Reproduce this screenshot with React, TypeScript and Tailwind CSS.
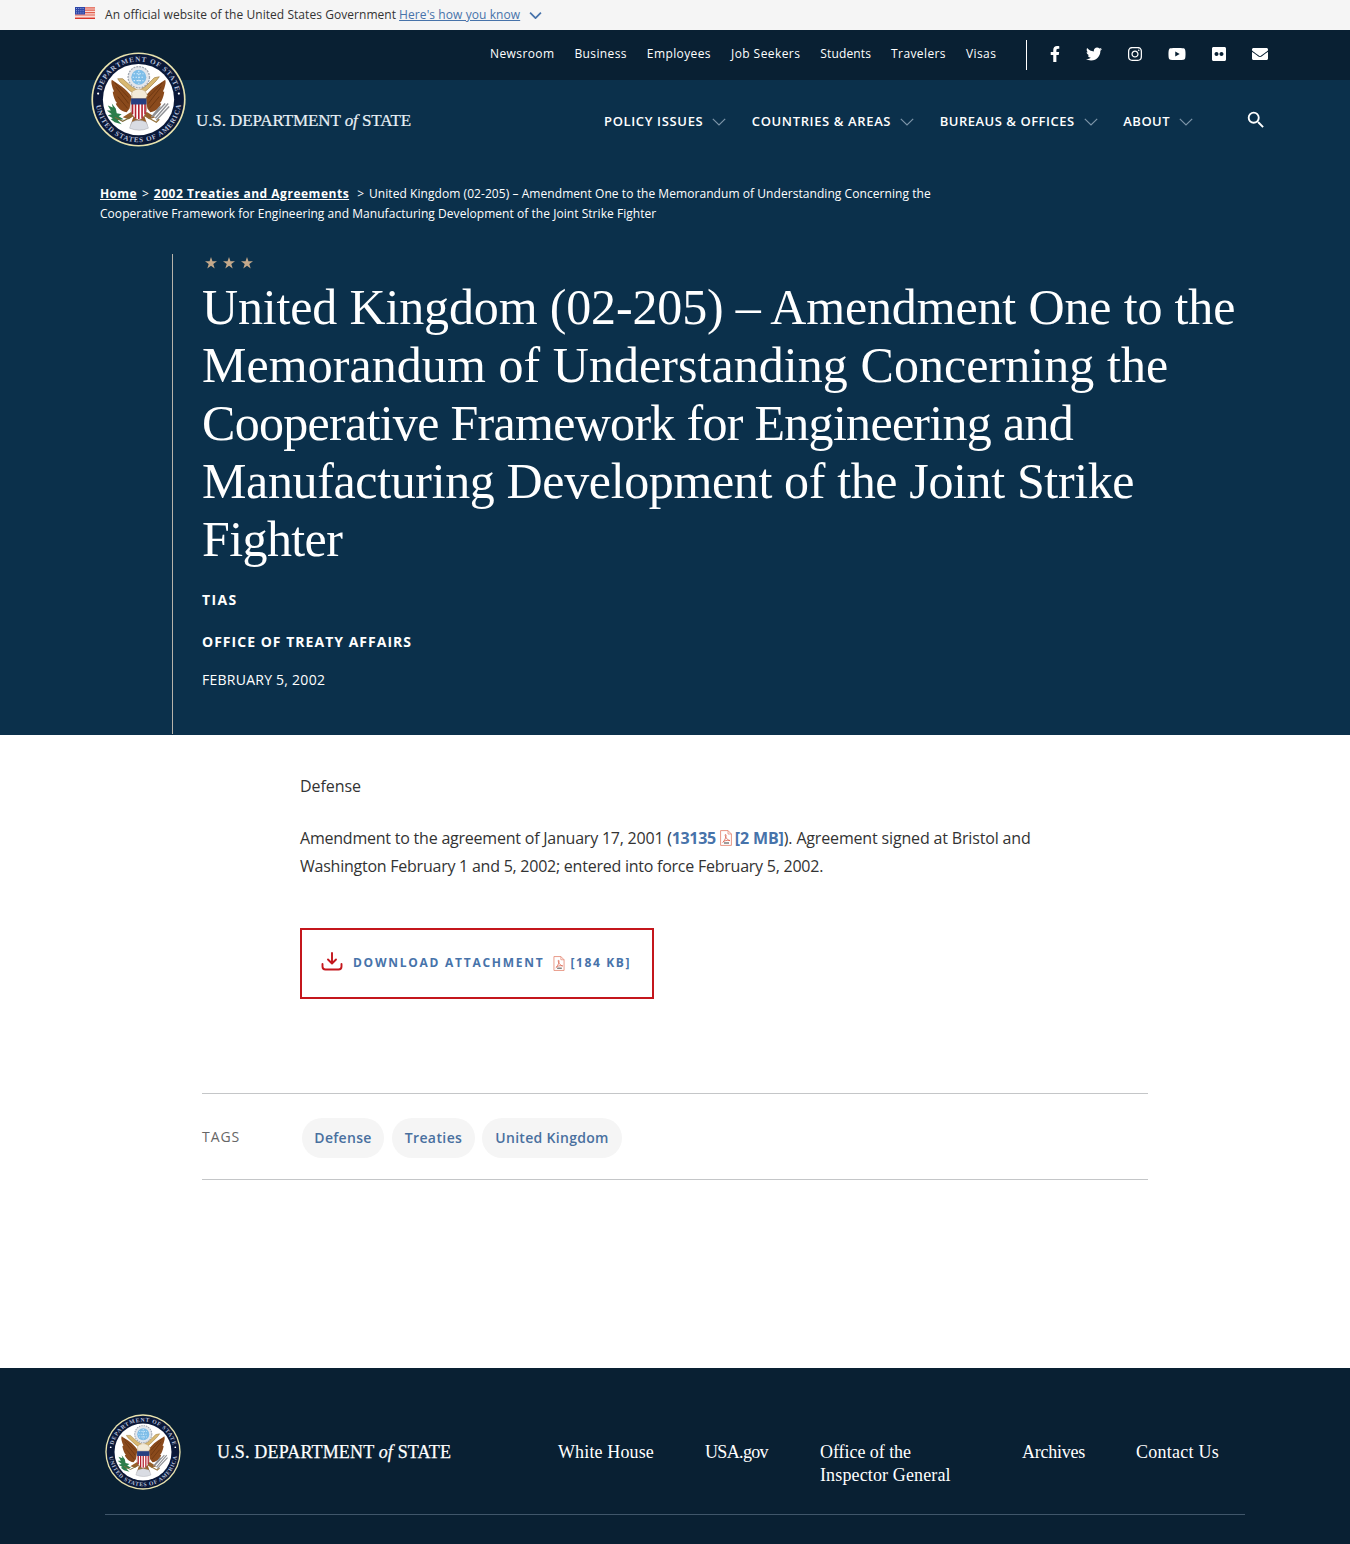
import React from 'react';
import { FaFacebookF, FaTwitter, FaInstagram, FaYoutube, FaFlickr, FaEnvelope } from 'react-icons/fa';
import { MdSearch } from 'react-icons/md';

const topLinks = [
  ['Newsroom', 'tracking-[0.4px]'],
  ['Business', 'tracking-[0.37px]'],
  ['Employees', 'tracking-[0.4px]'],
  ['Job Seekers', 'tracking-[0.43px]'],
  ['Students', 'tracking-[0.13px]'],
  ['Travelers', 'tracking-[0.4px]'],
  ['Visas', 'tracking-[0.4px]'],
];
const mainLinks = [
  ['POLICY ISSUES', 'tracking-[0.65px]'],
  ['COUNTRIES & AREAS', 'tracking-[0.63px]'],
  ['BUREAUS & OFFICES', 'tracking-[0.52px]'],
  ['ABOUT', 'tracking-[0.5px]'],
];
const titleLines = [
  ['United Kingdom (02-205) – Amendment One to the', 'tracking-[-0.15px]'],
  ['Memorandum of Understanding Concerning the', 'tracking-[0.06px]'],
  ['Cooperative Framework for Engineering and', 'tracking-[-0.7px]'],
  ['Manufacturing Development of the Joint Strike', 'tracking-[-0.36px]'],
  ['Fighter', 'tracking-[-0.6px]'],
];

function Seal({ id, className }: { id: string; className: string }) {
  return (
    <svg viewBox="0 0 96 96" className={className}>
      <circle cx="48" cy="48" r="47.6" fill="#e9e3ae" />
      <circle cx="48" cy="48" r="45.9" fill="#0a1838" />
      <circle cx="48" cy="48" r="36" fill="#fff" />
      <path id={id + 't'} d="M9.600 48A38.400 38.400 0 0 1 86.400 48" fill="none" />
      <path id={id + 'b'} d="M4.800 48A43.200 43.200 0 0 0 91.200 48" fill="none" />
      <g fill="#b4bfd8" fontFamily="Liberation Serif, serif" fontSize="7.2" fontWeight="bold">
        <text><textPath href={'#' + id + 't'} startOffset="9" textLength="103">DEPARTMENT OF STATE</textPath></text>
        <text><textPath href={'#' + id + 'b'} startOffset="6" textLength="124">UNITED STATES OF AMERICA</textPath></text>
      </g>
      <circle cx="7.200" cy="42" r="1.100" fill="#fff" />
      <circle cx="88.800" cy="42" r="1.100" fill="#fff" />
      <circle cx="48.300" cy="25.500" r="10.800" fill="#e3e6eb" stroke="#9fa6b0" strokeWidth="1.300" strokeDasharray="2 1" />
      <circle cx="48.300" cy="25.500" r="7.600" fill="#7dbde8" />
      <path d="M43 22h10M42 25.500h12M43 29h10M48.300 19v13" stroke="#d5ecfb" strokeWidth="1.200" strokeDasharray="1.500 1.500" />
      <path d="M21 28c7 5 14 8 20 17l-2 12-3 4c-6-1-10-6-11-9 2 0 1-1 0-2-2-4-3-8-3-10 2 1 1-1 0-3-1-4-2-6-1-9z" fill="#8a4a1c" />
      <path d="M75 28c-7 5-14 8-20 17l2 12 3 4c6-1 10-6 11-9-2 0-1-1 0-2 2-4 3-8 3-10-2 1-1-1 0-3 1-4 2-6 1-9z" fill="#8a4a1c" />
      <path d="M25 35l13 17M24 31l14 15M27 45l10 12M71 35L58 52M72 31L58 46M69 45L59 57" stroke="#5f2e0d" strokeWidth=".7" />
      <path d="M27 27l5 0 9 8 7 4 7-4 9-9 5-1-3 4-9 9-9 7-9-6-10-9z" fill="#d8b871" stroke="#937033" strokeWidth=".6" />
      <path d="M41 42c1-5 10-6 14-2l2 4-3 5H42z" fill="#f2ead8" stroke="#b69b70" strokeWidth=".5" />
      <path d="M40 61l-8 5 6 2 5-3-3 9 8 3 9-3-3-9 5 3 6-2-8-5z" fill="#96602a" />
      <path d="M41 71q7-4 15 0l2 6q-9 4-19 0z" fill="#d9dce3" stroke="#a4a6ae" strokeWidth=".5" />
      <path d="M40.500 47h15.500v12q-1 7-7.700 10-7-3-7.800-10z" fill="#fff" stroke="#6d4020" strokeWidth=".5" />
      <path d="M42 52v11M45 52v15M48.300 52v16M51.600 52v15M54.600 52v11" stroke="#b3212f" strokeWidth="1.600" />
      <path d="M40.500 47h15.500v6H40.500z" fill="#263f80" />
      <path d="M17 54l5 2-1-4 4 5 1 5 5 1-3 2 5 3-6 1 4 4-7-2-4-3 2-1-5-3 4-1-5-4 4 0z" fill="#2c7d4b" />
      <path d="M24 66l8 4 8-4" fill="none" stroke="#7a6a37" strokeWidth="1.200" />
      <path d="M65 67l13-15M63 65l12-13M66 69l13-14M61 66l9-11" stroke="#8e9095" strokeWidth="1.400" />
      <path d="M57 66l9 5 3-3" fill="none" stroke="#96733a" strokeWidth="1.300" />
    </svg>
  );
}

function Flag() {
  return (
    <svg viewBox="0 0 20 12" className="h-3 w-5">
      <path d="M0 0h20v12H0z" fill="#fbd9d4" />
      <path d="M0 .8h20M0 3.200h20M0 5.600h20M0 8h20" stroke="#e0604f" strokeWidth="1.200" />
      <path d="M0 11.300h20" stroke="#d8352a" strokeWidth="1.400" />
      <path d="M0 0h10v7.500H0z" fill="#2f47a8" />
      <path d="M1 1.500h8M1 3.700h8M1 5.900h8" stroke="#aebbe8" strokeWidth=".8" strokeDasharray="1 1.200" />
    </svg>
  );
}

function Chevron({ className }: { className: string }) {
  return (
    <svg viewBox="0 0 14 8" className={className} fill="none" stroke="currentColor">
      <path d="M.8.800L7 7 13.200.800" />
    </svg>
  );
}

function Pdf({ className }: { className: string }) {
  return (
    <svg viewBox="0 0 12 16" className={className} fill="none">
      <path d="M.6.600h7.400l3.400 3.400v11.400H.6z" stroke="#e58a76" strokeWidth=".9" />
      <path d="M8 .6V4h3.400" stroke="#e58a76" strokeWidth=".8" />
      <path d="M5.500 4.500c1.500 0-.2 6-3 8M5.500 4.500c-1 0 .3 5 4.500 6.300M3 12.200c1-1.500 4-2.200 7-1.800" stroke="#d8604a" strokeWidth=".8" />
      <path d="M4 13h5" stroke="#5b5b5b" strokeWidth="1.200" />
    </svg>
  );
}

function Star() {
  return (
    <svg viewBox="0 0 24 24" className="size-3" fill="#c5a98b">
      <path d="M12 0l2.900 8.700H24l-7.400 5.500 2.800 9L12 17.700l-7.400 5.500 2.800-9L0 8.700h9.100z" />
    </svg>
  );
}

export default function App() {
  return (
    <div className="h-[1544px] w-[1350px] overflow-hidden bg-white font-['Open_Sans',sans-serif] text-[#333]">
      <div className="flex h-[30px] items-center bg-[#f5f5f5] pl-[75px] text-xs tracking-[0.05px] whitespace-nowrap">
        <div className="mb-1"><Flag /></div>
        <span className="ml-[10px]">An official website of the United States Government</span>
        <span className="ml-[3px] tracking-[0.08px] text-[#4773aa] underline">Here's how you know</span>
        <Chevron className="mt-px ml-[9px] h-[7px] w-[13px] stroke-2 text-[#4773aa]" />
      </div>

      <header className="relative text-white">
        <div className="flex h-[50px] items-center bg-[#092033] pl-[490px]">
          <nav className="-mt-[3px] flex w-[536px] gap-5 text-xs whitespace-nowrap">
            {topLinks.map(([label, tracking]) => <span key={label} className={tracking}>{label}</span>)}
          </nav>
          <div className="h-[30px] w-px bg-white" />
          <div className="-mt-0.5 ml-[19px] flex items-center text-base">
            <FaFacebookF className="w-[18px]" />
            <FaTwitter className="ml-[21px] w-[18px]" />
            <FaInstagram className="ml-[23px] w-[18px]" />
            <FaYoutube className="ml-[24px] w-[18px]" />
            <FaFlickr className="ml-[24px] w-[18px]" />
            <FaEnvelope className="ml-[23px] w-[18px]" />
          </div>
        </div>
        <div className="flex h-[83px] items-center bg-[#0b304b] pl-[196px]">
          <div className="-mt-0.5 w-[216px] font-['Liberation_Serif',serif] text-[17px] tracking-[-0.09px] whitespace-nowrap text-[#e9f0f6] [-webkit-text-stroke:0.2px_#e9f0f6]">U.S. DEPARTMENT <i>of</i> STATE</div>
          <nav className="ml-[192px] flex w-[592px] gap-[25.5px] text-[13px] font-semibold whitespace-nowrap">
            {mainLinks.map(([label, tracking]) => (
              <div key={label} className="flex items-center">
                <span className={tracking}>{label}</span>
                <Chevron className="ml-[9px] h-2 w-[14px] stroke-[1.2] text-[#7d95a8]" />
              </div>
            ))}
          </nav>
          <MdSearch className="-mt-1 ml-[49px] size-[22px]" />
        </div>
        <Seal id="h" className="absolute top-[21.5px] left-[90.5px] size-[95px]" />
      </header>

      <section className="h-[572px] bg-[#0b304b] pt-[21px] pl-[100px] text-white">
        <div className="text-xs leading-5 whitespace-nowrap">
          <div className="flex">
            <b className="tracking-[0.35px] underline">Home</b>
            <span className="ml-[5px]">&gt;</span>
            <b className="ml-[5px] tracking-[0.52px] underline">2002 Treaties and Agreements</b>
            <span className="ml-[8px]">&gt;</span>
            <span className="ml-[5px] tracking-[0.06px]">United Kingdom (02-205) – Amendment One to the Memorandum of Understanding Concerning the</span>
          </div>
          <span className="tracking-[0.045px]">Cooperative Framework for Engineering and Manufacturing Development of the Joint Strike Fighter</span>
        </div>
        <div className="mt-[30px] ml-[72px] h-[480px] border-l border-[#b7b3aa] pt-[3px] pl-[29px]">
          <div className="flex gap-1.5 pl-[3px]"><Star /><Star /><Star /></div>
          <h1 className="mt-[9px] font-['Liberation_Serif',serif] text-[50px] leading-[58px] whitespace-nowrap">
            {titleLines.map(([line, tracking]) => <span key={line} className={`block ${tracking}`}>{line}</span>)}
          </h1>
          <p className="mt-[22px] text-sm font-bold tracking-[1.4px]">TIAS</p>
          <p className="mt-[22px] text-sm font-bold tracking-[1.02px]">OFFICE OF TREATY AFFAIRS</p>
          <p className="mt-[18px] text-sm tracking-[0.25px]">FEBRUARY 5, 2002</p>
        </div>
      </section>

      <main className="h-[633px] pt-[37px] pl-[300px]">
        <div className="text-base leading-7 tracking-[-0.22px] whitespace-nowrap">
          <p className="tracking-[-0.05px]">Defense</p>
          <p className="mt-6 flex items-center">
            <span>Amendment to the agreement of January 17, 2001 (</span>
            <b className="tracking-[-0.35px] text-[#4773aa]">13135</b>
            <Pdf className="mr-[3px] ml-1 h-4 w-3" />
            <b className="tracking-[-0.12px] text-[#4773aa]">[2 MB]</b>
            <span className="tracking-[-0.16px]">). Agreement signed at Bristol and</span>
          </p>
          <p className="tracking-[-0.24px]">Washington February 1 and 5, 2002; entered into force February 5, 2002.</p>
        </div>
        <div className="mt-12 flex h-[71px] w-[354px] items-center border-2 border-[#c4161c] pb-0.5 pl-[19px] text-xs font-bold tracking-[1.74px] whitespace-nowrap text-[#4773aa]">
          <svg viewBox="0 0 22 20" className="mb-1 h-5 w-[22px]" fill="none" stroke="#c4161c" strokeWidth="1.900" strokeLinecap="round" strokeLinejoin="round">
            <path d="M11 2v10M7 8.500l4 4 4-4M1.500 13v2.500q0 3 3 3h13q3 0 3-3V13" />
          </svg>
          <span className="ml-[10px]">DOWNLOAD ATTACHMENT</span>
          <Pdf className="mt-px ml-2 h-[15px] w-3" />
          <span className="ml-[6px] tracking-[1.6px]">[184 KB]</span>
        </div>
        <div className="mt-[94px] -ml-[98px] flex h-[87px] w-[946px] items-center border-y border-[#c4c6c8] text-sm">
          <span className="w-[100px] tracking-[0.95px] text-[#666]">TAGS</span>
          <div className="mt-0.5 flex gap-2 font-semibold tracking-[0.3px] text-[#49709f]">
            <span className="flex h-10 w-[82px] items-center justify-center rounded-full bg-[#f5f5f5]">Defense</span>
            <span className="flex h-10 w-[83px] items-center justify-center rounded-full bg-[#f5f5f5] tracking-[0.4px]">Treaties</span>
            <span className="-ml-px flex h-10 w-[140px] items-center justify-center rounded-full bg-[#f5f5f5]">United Kingdom</span>
          </div>
        </div>
      </main>

      <footer className="h-[176px] bg-[#092033] px-[105px] pt-[46px] text-white">
        <div className="flex h-[101px] border-b border-[#40566a] font-['Liberation_Serif',serif] text-lg leading-[23px] whitespace-nowrap">
          <Seal id="f" className="size-[76px]" />
          <div className="mt-[27px] ml-[36px] w-[235px] tracking-[0.17px] [-webkit-text-stroke:0.25px_white]">U.S. DEPARTMENT <i>of</i> STATE</div>
          <div className="mt-[27px] ml-[106px] flex">
            <span className="w-[147px] tracking-[0.13px]">White House</span>
            <span className="w-[115px] tracking-[-0.65px]">USA.gov</span>
            <span className="w-[202px]"><span className="tracking-[-0.05px]">Office of the</span><br /><span className="tracking-[0.13px]">Inspector General</span></span>
            <span className="w-[114px] tracking-[-0.25px]">Archives</span>
            <span className="tracking-[0.25px]">Contact Us</span>
          </div>
        </div>
      </footer>
    </div>
  );
}
